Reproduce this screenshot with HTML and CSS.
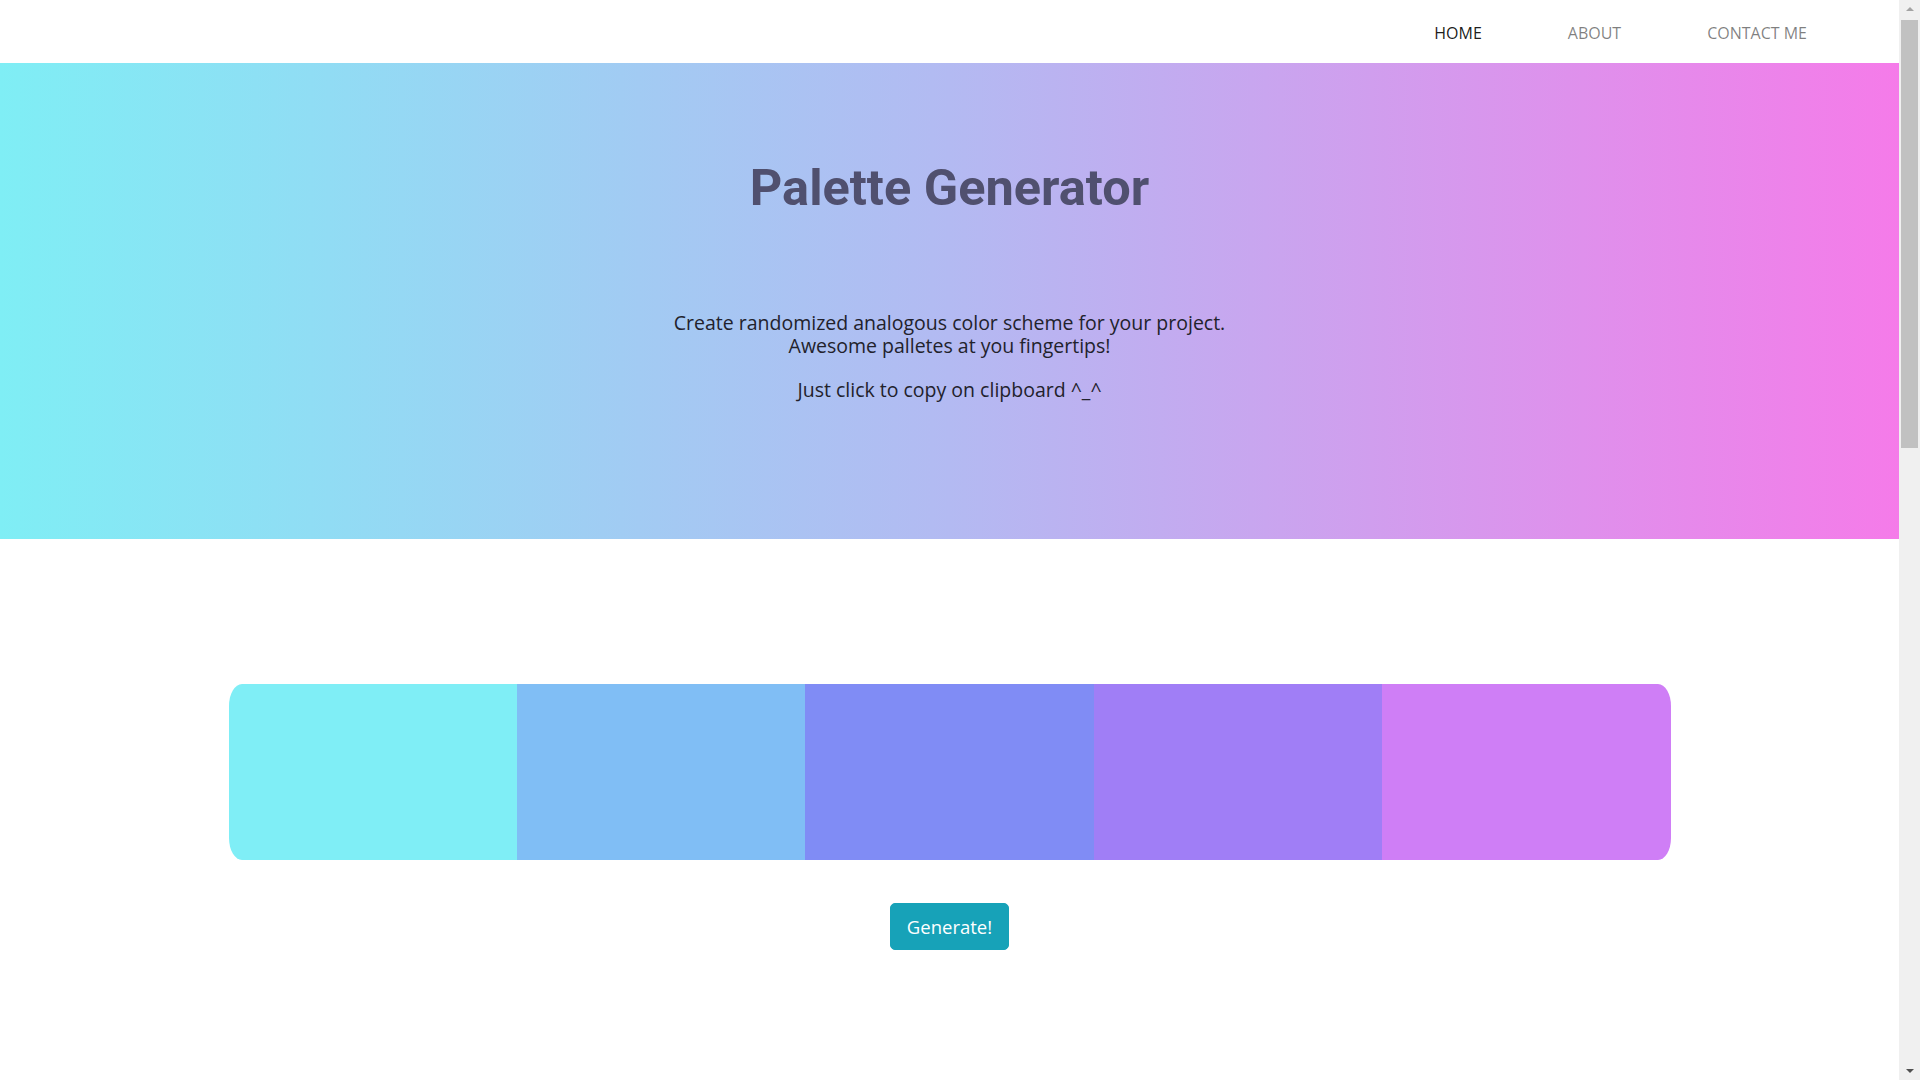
FILE: index.html
```html
<!DOCTYPE html>
<html lang="en">
<head>
<meta charset="utf-8">
<title>Palette Generator</title>
<link rel="stylesheet" href="styles.css">
</head>
<body>
<div class="page">
  <nav class="navbar">
    <ul class="nav-links">
      <li><a class="nav-link active" href="#">HOME</a></li>
      <li><a class="nav-link" href="#">ABOUT</a></li>
      <li><a class="nav-link" href="#">CONTACT ME</a></li>
    </ul>
  </nav>
  <header class="hero">
    <h1 class="hero-title">Palette Generator</h1>
    <p class="hero-text">Create randomized analogous color scheme for your project.<br>Awesome palletes at you fingertips!</p>
    <p class="hero-text">Just click to copy on clipboard ^_^</p>
  </header>
  <main class="generator">
    <div class="palette">
      <div class="swatch swatch-1"></div>
      <div class="swatch swatch-2"></div>
      <div class="swatch swatch-3"></div>
      <div class="swatch swatch-4"></div>
      <div class="swatch swatch-5"></div>
    </div>
    <button class="btn-generate" type="button">Generate!</button>
  </main>
</div>
<div class="scrollbar" aria-hidden="true">
  <div class="sb-arrow sb-up"></div>
  <div class="sb-track"><div class="sb-thumb"></div></div>
  <div class="sb-arrow sb-down"></div>
</div>
</body>
</html>
```

FILE: styles.css
```css
body {
  margin: 0;
  display: flex;
  align-items: flex-start;
  font-family: "Open Sans", "Noto Sans", sans-serif;
  color: #212529;
  background: #fff;
}
.page {
  flex: 1;
  min-width: 0;
}
.scrollbar {
  position: sticky;
  top: 0;
  width: 21px;
  height: 100vh;
  flex-shrink: 0;
  background: #f0f0f0;
  display: flex;
  flex-direction: column;
}
.sb-arrow {
  height: 20px;
  display: flex;
  align-items: center;
  justify-content: center;
}
.sb-arrow::before {
  content: "";
  width: 0;
  height: 0;
  border-left: 4px solid transparent;
  border-right: 4px solid transparent;
}
.sb-up::before {
  border-bottom: 4px solid #a3a3a3;
  margin-top: -2px;
}
.sb-down::before {
  border-top: 4px solid #505050;
  margin-top: 2px;
}
.sb-track {
  flex: 1;
  padding: 0 2px;
}
.sb-thumb {
  height: 428px;
  background: #c1c1c1;
}
.navbar {
  height: 63px;
  box-sizing: border-box;
  padding-top: 2px;
  display: flex;
  align-items: center;
  justify-content: flex-end;
  padding-right: 92px;
}
.nav-links {
  list-style: none;
  margin: 0;
  padding: 0;
  display: flex;
  gap: 86px;
}
.nav-link {
  font-size: 16px;
  text-decoration: none;
  color: rgba(0, 0, 0, 0.5);
}
.nav-link.active {
  color: rgba(0, 0, 0, 0.9);
}
.hero {
  height: 476px;
  box-sizing: border-box;
  padding-top: 95px;
  text-align: center;
  background: linear-gradient(to right, #7feef5, #b3baf2 50%, #f57be9);
}
.hero-title {
  margin: 0 0 93px;
  font-family: Roboto, sans-serif;
  font-weight: 700;
  font-size: 50.5px;
  line-height: 60px;
  color: #50506f;
}
.hero-text {
  margin: 0 0 20.5px;
  font-size: 19.5px;
  line-height: 23px;
  color: #22222c;
}
.generator {
  padding-top: 145px;
  padding-bottom: 1680px;
  display: flex;
  flex-direction: column;
  align-items: center;
}
.palette {
  width: 1442px;
  height: 176px;
  display: flex;
  border-radius: 13px / 22px;
  overflow: hidden;
  margin-bottom: 43px;
}
.swatch {
  flex: 1;
}
.swatch-1 { background: #7feef6; }
.swatch-2 { background: #80bef5; }
.swatch-3 { background: #808cf5; }
.swatch-4 { background: #a07ef6; }
.swatch-5 { background: #cf7ef6; }
.btn-generate {
  font-family: "Open Sans", "Noto Sans", sans-serif;
  font-size: 18.5px;
  line-height: 29px;
  padding: 8px 16px;
  color: #fff;
  background: #17a2b8;
  border: 1px solid #17a2b8;
  border-radius: 5px;
  cursor: pointer;
}
```
